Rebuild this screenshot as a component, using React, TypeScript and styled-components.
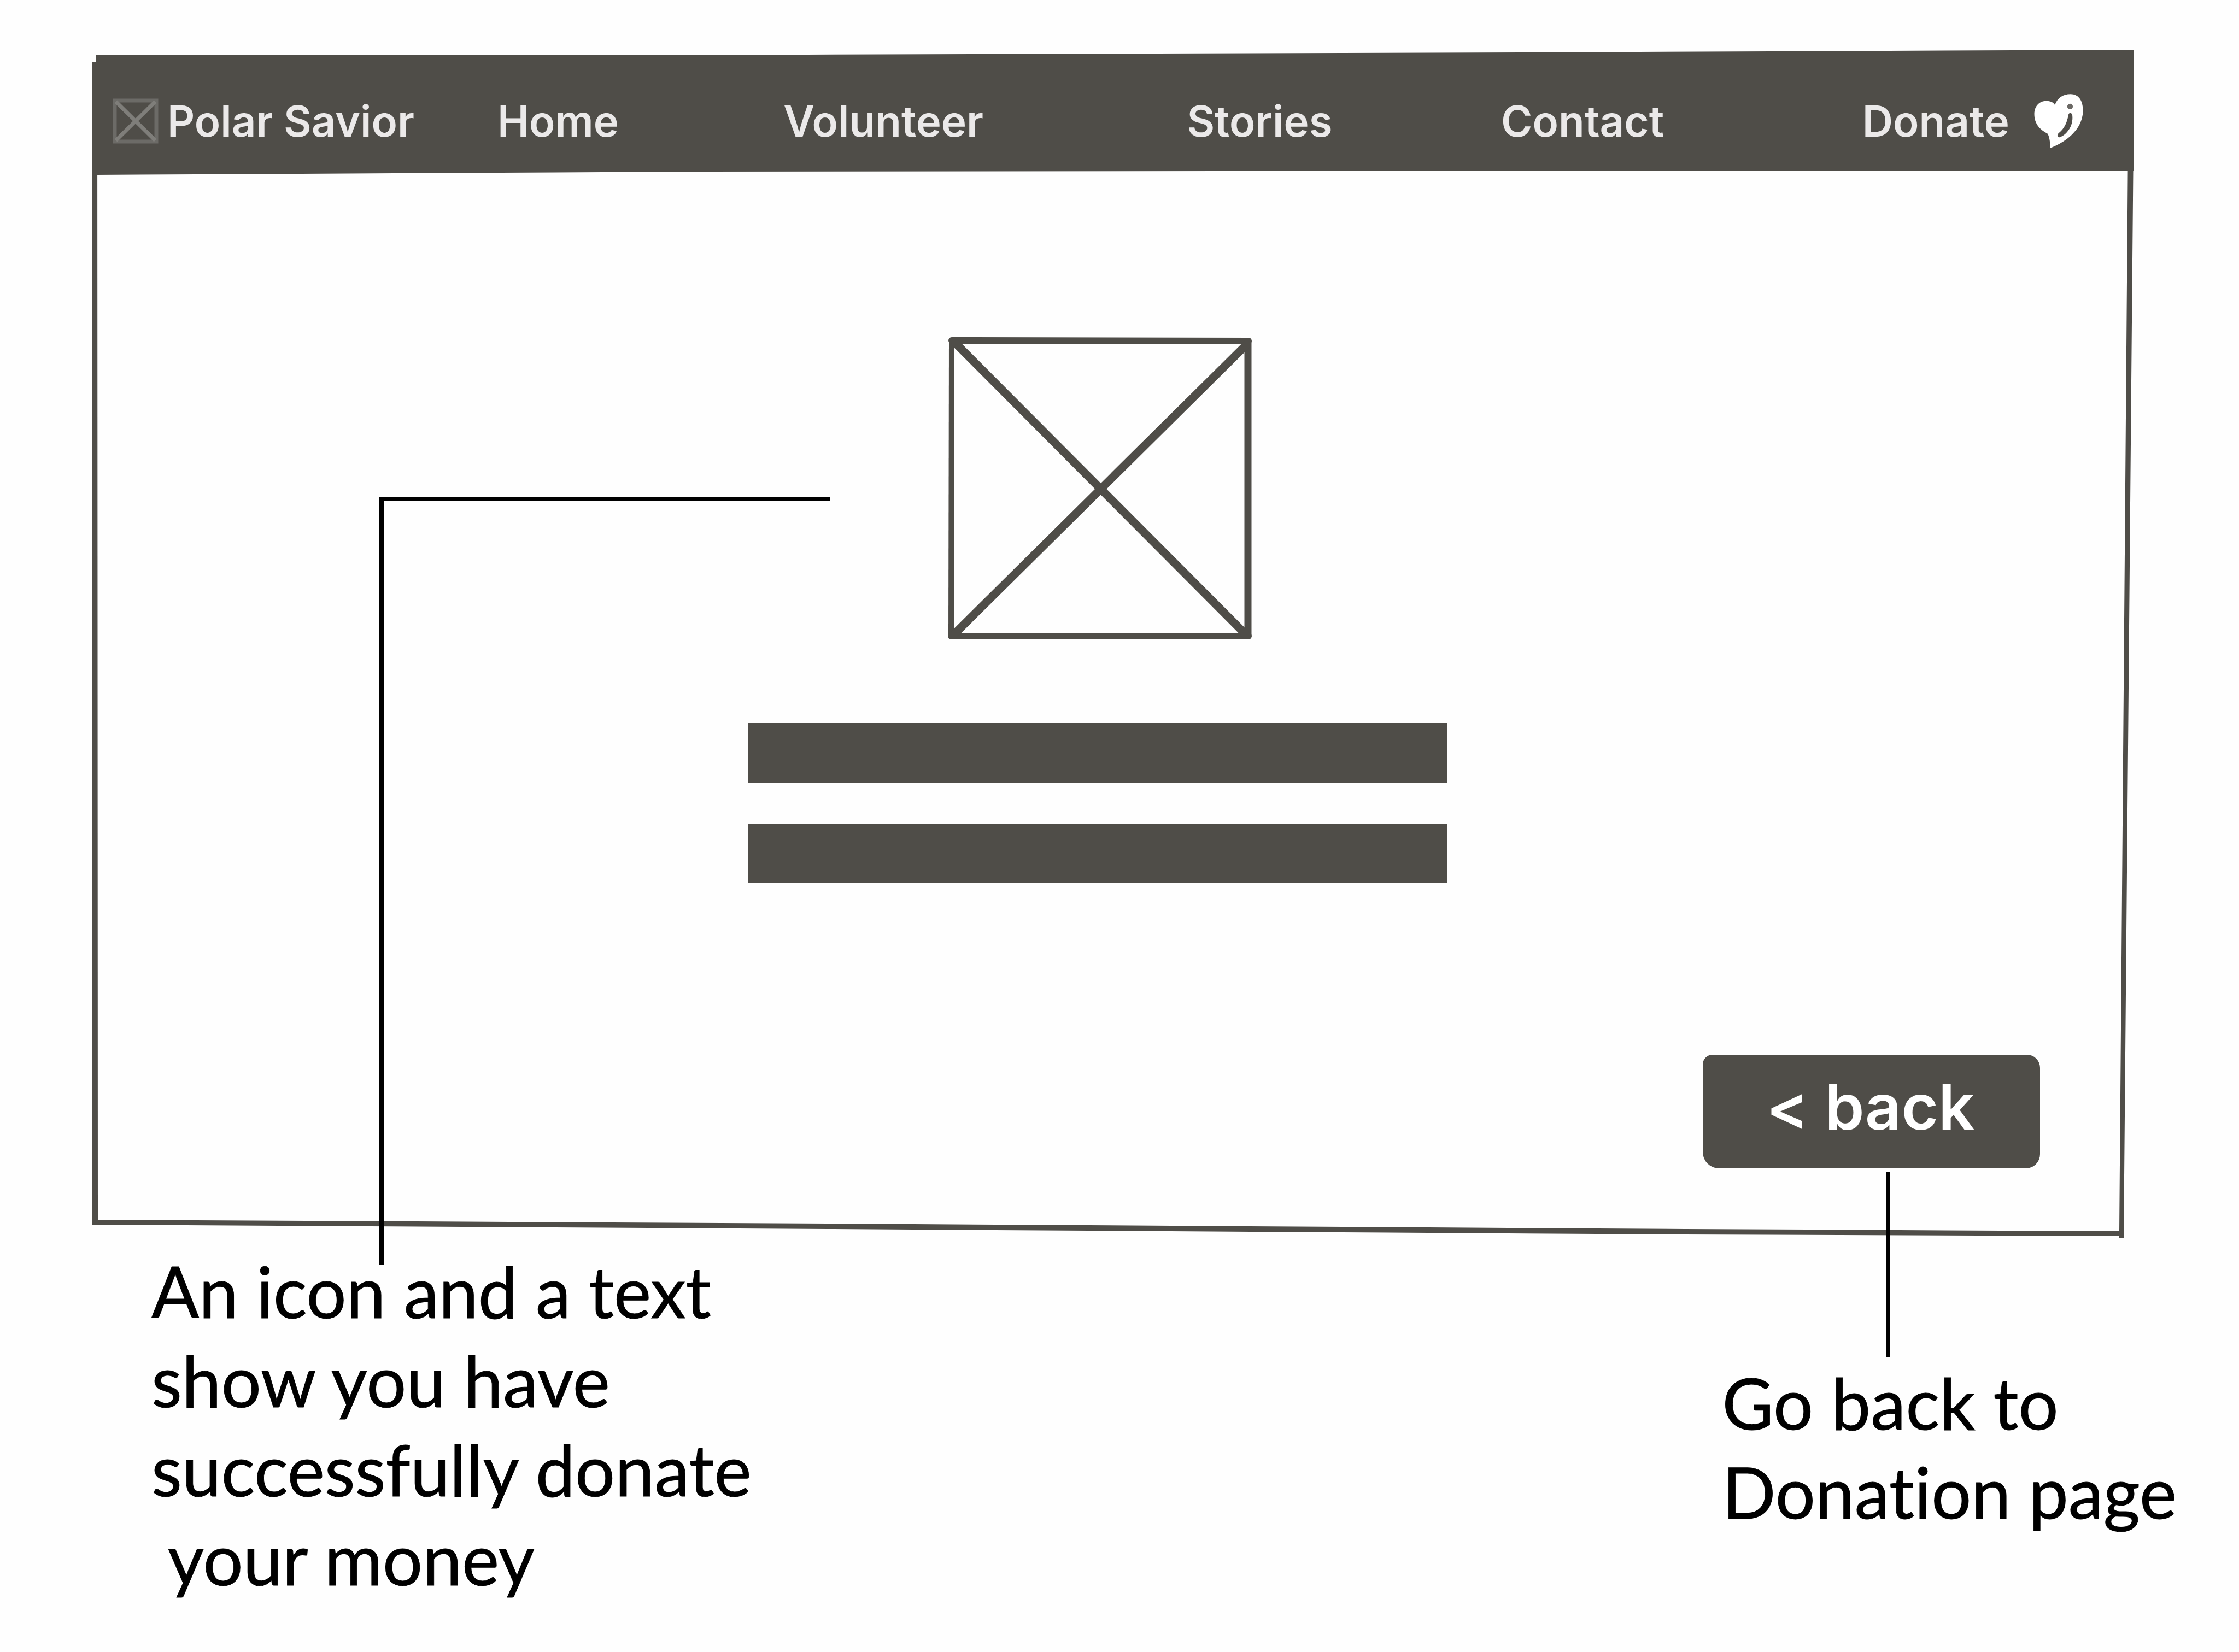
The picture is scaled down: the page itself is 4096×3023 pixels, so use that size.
import React from "react";
import styled, { createGlobalStyle } from "styled-components";

const ink = "#4f4d48";
const paper = "#fefefe";
const grotesque = 'Inter, "Liberation Sans", Arial, sans-serif';
const humanist = 'Lato, "Open Sans", sans-serif';

const GlobalStyle = createGlobalStyle`
  *, *::before, *::after { box-sizing: border-box; }
  body { margin: 0; background: ${paper}; }
`;

const Page = styled.div`
  min-height: 100vh;
  padding-top: 91px;
  background: ${paper};
  overflow: hidden;
`;

/* The window outline leans a little, like a pen sketch. */
const Frame = styled.section`
  position: relative;
  display: flex;
  flex-direction: column;
  margin: 0 192px 0 169px;

  &::before {
    content: "";
    position: absolute;
    inset: 0;
    background: ${ink};
    pointer-events: none;
    clip-path: polygon(
      0 22px, 9px 22px,
      10px calc(100% - 33px), 36% calc(100% - 26px), 78% calc(100% - 16px), calc(100% - 27px) calc(100% - 12px),
      calc(100% - 10px) 50px, 100% 50px,
      calc(100% - 19px) 100%, calc(100% - 27px) 100%, calc(100% - 27px) calc(100% - 3px),
      78% calc(100% - 6px), 36% calc(100% - 16px), 0 calc(100% - 24px)
    );
  }
`;

const Header = styled.header`
  position: relative;
  height: 229px;
  padding: 0 92px 0 37px;
  display: flex;
  background: ${ink};
  clip-path: polygon(
    6px 9px, 35% 9px, 70% 5px, 100% 0,
    100% 221px, 55% 222px, 30% 223px, 6px 229px
  );
`;

const Nav = styled.nav`
  flex: 1;
  display: grid;
  grid-template-columns: 702fr 522fr 736fr 573fr 659fr auto;
  align-items: center;
  padding-top: 32px;
`;

const NavLink = styled.a`
  display: inline-flex;
  align-items: center;
  color: #ebe9e9;
  font: 600 78px/120px ${grotesque};
  text-decoration: none;
  white-space: nowrap;
`;

const BrandLink = styled(NavLink)`
  gap: 16px;
`;

const DonateLink = styled(NavLink)`
  gap: 44px;
`;

const LogoBox = styled.svg`
  width: 84px;
  height: 84px;
  flex: none;
`;

const Heart = styled.svg`
  width: 92px;
  height: 103px;
  flex: none;
`;

const Main = styled.main`
  display: flex;
  flex-direction: column;
  padding: 296px 172px 127px 114px;
`;

const Message = styled.div`
  align-self: center;
  display: flex;
  flex-direction: column;
  align-items: center;
`;

const Picture = styled.svg`
  width: 564px;
  height: 555px;
  margin-bottom: 152px;
`;

const TextBar = styled.div`
  width: 1279px;
  max-width: 100%;
  height: 109px;
  background: ${ink};

  & + & {
    margin-top: 75px;
  }
`;

const BackArea = styled.div`
  position: relative;
  align-self: flex-end;
  margin-top: 314px;
`;

const BackButton = styled.button`
  display: block;
  width: 617px;
  height: 208px;
  padding: 0 4px 18px 0;
  border: 0;
  border-radius: 18px 24px 26px 30px;
  background: ${ink};
  color: #fff;
  font: 600 116px/150px ${grotesque};
  cursor: pointer;
`;

const PictureLeader = styled.span`
  position: absolute;
  left: 525px;
  top: 818px;
  bottom: -49px;
  width: 824px;
  border: solid #000;
  border-width: 8px 0 0 8px;
`;

const BackLeader = styled.span`
  position: absolute;
  left: 335px;
  top: calc(100% + 6px);
  width: 8px;
  height: 339px;
  background: #000;
`;

const Notes = styled.div`
  display: flex;
  justify-content: space-between;
  align-items: flex-start;
  padding: 16px 114px 0 277px;
`;

const Note = styled.p`
  margin: 0;
  color: #000;
  font: 129px/163px ${humanist};
  font-variant-ligatures: none;
  -webkit-text-stroke: 1px #000;
  white-space: pre;
`;

const BackNote = styled(Note)`
  margin-top: 204px;
`;

const pages = ["Home", "Volunteer", "Stories", "Contact"];

export default function App() {
  return (
    <Page>
      <GlobalStyle />
      <Frame>
        <Header>
          <Nav aria-label="Main">
            <BrandLink href="#">
              <LogoBox viewBox="0 0 84 84" fill="none" stroke="#6c6b67" strokeWidth="7" aria-hidden="true">
                <path d="M4 4H80V79H4Z" />
                <path d="M6 6L78 77M78 6L6 77" stroke="#7f7e7a" strokeWidth="7" />
              </LogoBox>
              Polar Savior
            </BrandLink>
            {pages.map((name) => (
              <NavLink key={name} href={"#" + name.toLowerCase()}>
                {name}
              </NavLink>
            ))}
            <DonateLink href="#donate">
              Donate
              <Heart viewBox="190 100 305 340" aria-hidden="true">
                <path
                  fill="#fff"
                  d="M292 434C291 400 288 368 276 347C235 325 195 292 195 228C195 180 225 148 267 148C292 148 310 156 320 172C335 130 370 107 415 107C466 107 492 150 490 212C486 310 410 386 292 434Z"
                />
                <path fill={ink} d="M402 232C406 216 424 218 426 238C432 300 394 350 352 368C334 372 330 352 344 342C376 318 394 280 402 232Z" />
                <circle cx="412" cy="182" r="17" fill="#6b6965" />
              </Heart>
            </DonateLink>
          </Nav>
        </Header>
        <Main>
          <Message>
            <Picture viewBox="0 0 564 555" fill="none" stroke={ink} strokeLinejoin="round" role="img" aria-label="Donation received">
              <path d="M15 6L14 548" strokeWidth="10" />
              <path d="M15 7L558 8M14 548H558" strokeWidth="12" strokeLinecap="round" />
              <path d="M557 8V548" strokeWidth="13" />
              <path d="M20 10L554 546M557 12L18 546" strokeWidth="15" />
            </Picture>
            <TextBar />
            <TextBar />
          </Message>
          <BackArea>
            <BackButton type="button">&lt; back</BackButton>
            <BackLeader />
          </BackArea>
        </Main>
        <PictureLeader />
      </Frame>
      <Notes>
        <Note>{"An icon and a text\nshow you have\nsuccessfully donate\n your money"}</Note>
        <BackNote>{"Go back to\nDonation page"}</BackNote>
      </Notes>
    </Page>
  );
}
